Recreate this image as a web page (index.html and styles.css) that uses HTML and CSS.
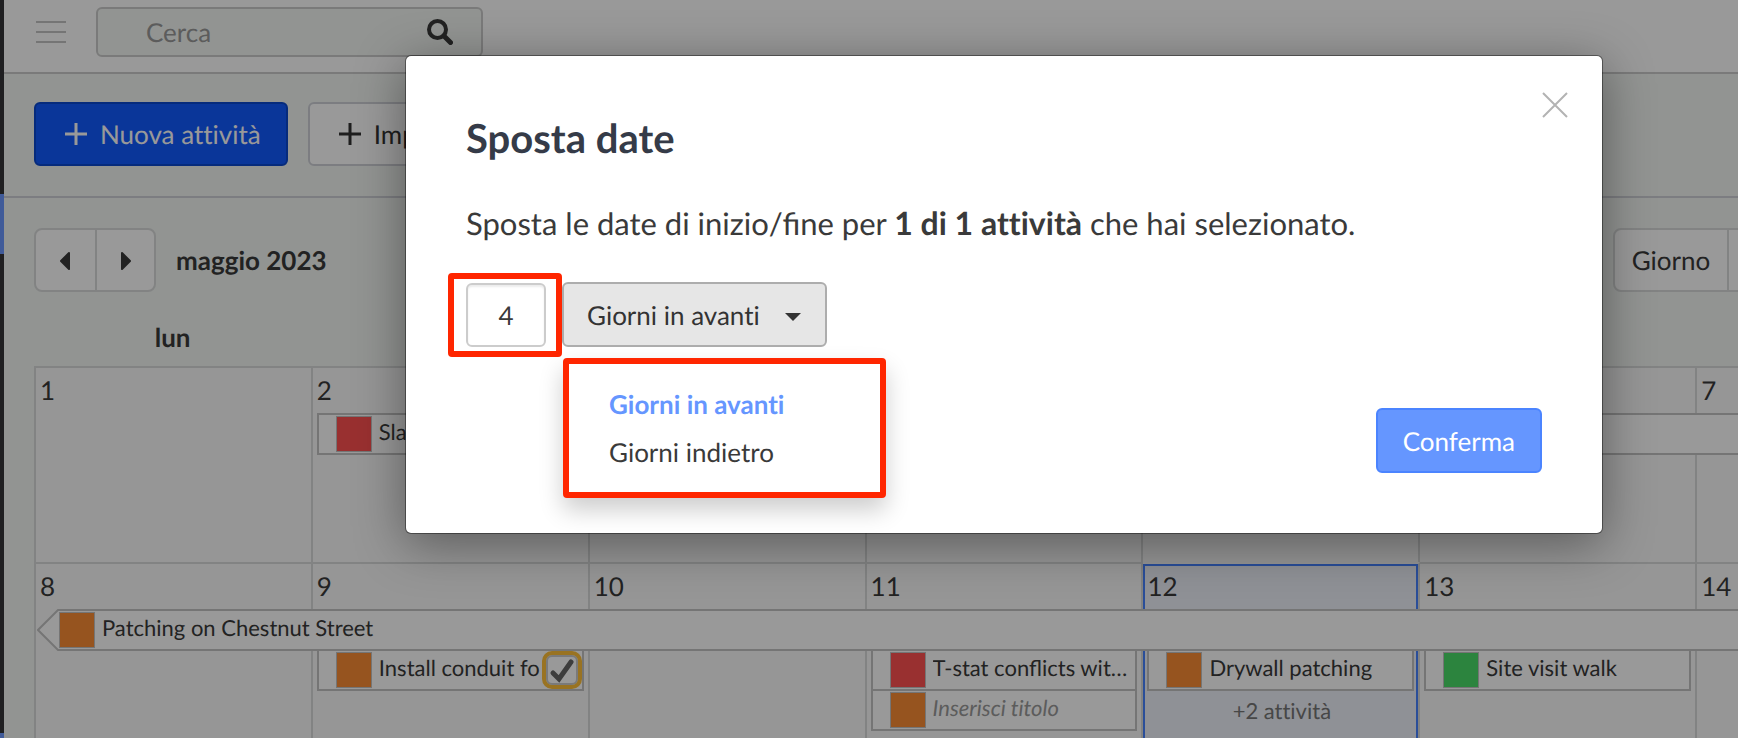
FILE: index.html
```
<!DOCTYPE html>
<html lang="it">

<head>
    <meta charset="utf-8">
    <title>Calendario</title>
    <link rel="stylesheet" href="styles.css">
</head>

<body>

    <div class="app">

        <nav class="sidebar">
            <span class="marker"></span>
            <span class="marker"></span>
        </nav>

        <main class="main">

            <header class="topbar">
                <button class="menu-toggle" aria-label="Menu">
                    <svg width="30" height="24" viewBox="0 0 30 24">
                        <path d="M0 2h30M0 12h30M0 22h30" stroke="#c4c4c4" stroke-width="2" />
                    </svg>
                </button>
                <div class="search">
                    <input type="search" placeholder="Cerca" aria-label="Cerca">
                    <svg width="26" height="26" viewBox="0 0 26 26" fill="none" stroke="#3a3a3a">
                        <circle cx="10.5" cy="10.5" r="8.5" stroke-width="4" />
                        <path d="M17 17l6.5 6.5" stroke-width="5" stroke-linecap="round" />
                    </svg>
                </div>
            </header>

            <div class="toolbar">
                <button class="btn btn-primary">
                    <svg class="plus" width="22" height="22" viewBox="0 0 22 22">
                        <path d="M11 0v22M0 11h22" stroke="currentColor" stroke-width="3" />
                    </svg>
                    Nuova attività
                </button>
                <button class="btn">
                    <svg class="plus" width="22" height="22" viewBox="0 0 22 22">
                        <path d="M11 0v22M0 11h22" stroke="currentColor" stroke-width="3" />
                    </svg>
                    Importa
                </button>
            </div>

            <section class="calendar">

                <div class="controls">
                    <div class="group">
                        <button class="arrow" aria-label="Mese precedente">
                            <svg width="11" height="18" viewBox="0 0 11 18">
                                <path d="M9 1L1 9l8 8z" fill="currentColor" stroke="currentColor" stroke-width="2" stroke-linejoin="round" />
                            </svg>
                        </button>
                        <button class="arrow" aria-label="Mese successivo">
                            <svg width="11" height="18" viewBox="0 0 11 18">
                                <path d="M2 1l8 8-8 8z" fill="currentColor" stroke="currentColor" stroke-width="2" stroke-linejoin="round" />
                            </svg>
                        </button>
                    </div>
                    <h2>maggio 2023</h2>
                    <div class="group views">
                        <button>Giorno</button>
                        <button>Settimana</button>
                        <button>Mese</button>
                    </div>
                </div>

                <div class="weekdays">
                    <span>lun</span>
                    <span>mar</span>
                    <span>mer</span>
                    <span>gio</span>
                    <span>ven</span>
                    <span>sab</span>
                    <span>dom</span>
                </div>

                <div class="week">
                    <div class="day col-1">1</div>
                    <div class="day col-2">2</div>
                    <div class="day col-3">3</div>
                    <div class="day col-4">4</div>
                    <div class="day col-5">5</div>
                    <div class="day col-6">6</div>
                    <div class="day col-7">7</div>
                    <div class="event from-2 to-end row-1"><i class="swatch red"></i><span>Slab</span></div>
                </div>

                <div class="week">
                    <div class="day col-1">8</div>
                    <div class="day col-2">9</div>
                    <div class="day col-3">10</div>
                    <div class="day col-4">11</div>
                    <div class="day col-5 today">12</div>
                    <div class="day col-6">13</div>
                    <div class="day col-7">14</div>

                    <div class="event from-1 to-end row-1 continued">
                        <svg width="22" height="42" viewBox="0 0 22 42">
                            <path d="M22 1h-1L1 21l20 20h1" fill="#fff" stroke="#c3c3c3" stroke-width="2" />
                        </svg>
                        <div class="event-body"><i class="swatch orange"></i><span>Patching on Chestnut Street</span></div>
                    </div>

                    <div class="event from-2 row-2">
                        <i class="swatch orange"></i><span class="cut">Install conduit fo</span>
                        <label class="tick">
                            <input type="checkbox" checked aria-label="Seleziona attività">
                            <svg width="26" height="26" viewBox="0 0 26 26">
                                <path d="M4 16l6 6L22 5" fill="none" stroke="#666" stroke-width="5" stroke-linecap="round" />
                            </svg>
                        </label>
                    </div>
                    <div class="event from-4 row-2"><i class="swatch red"></i><span>T-stat conflicts with ceiling</span></div>
                    <div class="event from-4 row-3"><i class="swatch orange"></i><span class="untitled">Inserisci titolo</span></div>
                    <div class="event from-5 row-2"><i class="swatch orange"></i><span>Drywall patching</span></div>
                    <a href="#" class="more from-5 row-3">+2 attività</a>
                    <div class="event from-6 row-2"><i class="swatch green"></i><span>Site visit walk</span></div>
                </div>

            </section>
        </main>

        <div class="overlay">
            <div class="modal" role="dialog" aria-labelledby="modal-title">
                <button class="close" aria-label="Chiudi">
                    <svg width="26" height="26" viewBox="0 0 26 26">
                        <path d="M1 1l24 24M25 1L1 25" stroke="#b3b3b3" stroke-width="2" />
                    </svg>
                </button>

                <h1 id="modal-title">Sposta date</h1>
                <p>Sposta le date di inizio/fine per <b>1 di 1 attività</b> che hai selezionato.</p>

                <div class="fields">
                    <div class="amount">
                        <input type="text" value="4" aria-label="Numero di giorni">
                    </div>
                    <div class="direction">
                        <select aria-label="Direzione">
                            <option>Giorni in avanti</option>
                            <option>Giorni indietro</option>
                        </select>
                        <svg class="caret" width="16" height="8" viewBox="0 0 16 8">
                            <path d="M0 0h16L8 8z" fill="#333" />
                        </svg>
                        <div class="dropdown">
                            <button class="active">Giorni in avanti</button>
                            <button>Giorni indietro</button>
                        </div>
                    </div>
                </div>

                <div class="actions">
                    <button class="confirm">Conferma</button>
                </div>
            </div>
        </div>
    </div>

</body>

</html>
```
FILE: styles.css
```
* {
    box-sizing: border-box;
}

body {
    margin: 0;
    height: 100vh;
    overflow: hidden;
    font-family: Lato, sans-serif;
    font-size: 26px;
    line-height: 32px;
    font-variant-ligatures: none;
    text-rendering: geometricPrecision;
    color: #3a3a3a;
    background-color: #f3f7f4;
}

button,
input,
select {
    font: inherit;
    font-variant-ligatures: none;
    text-rendering: inherit;
    color: inherit;
}

button {
    cursor: pointer;
}

/* the board is wider than the window and runs off its right side */
.app {
    position: relative;
    display: flex;
    width: calc(100% + 270px);
    height: 100vh;
    overflow: hidden;
}

.sidebar {
    display: flex;
    flex-direction: column;
    gap: 479px;
    flex: 0 0 4px;
    padding-top: 194px;
    background-color: #353537;
}

.marker {
    flex: 0 0 60px;
    background-color: #6b98ff;
}

.main {
    flex: 1;
    min-width: 0;
}

.topbar {
    display: flex;
    align-items: flex-start;
    gap: 30px;
    height: 74px;
    padding: 7px 32px;
    background-color: #fff;
    border-bottom: 2px solid #cbcccb;
}

.menu-toggle {
    display: flex;
    padding: 13px 0;
    border: none;
    background: none;
}

.search {
    display: flex;
    align-items: center;
    width: 387px;
    height: 50px;
    padding: 0 28px 0 48px;
    background-color: #f3f7f4;
    border: 2px solid #cbcccb;
    border-radius: 6px;
}

.search input {
    flex: 1;
    min-width: 0;
    padding: 0;
    border: none;
    outline: none;
    background: none;
}

.search input::placeholder {
    color: #999;
}

.toolbar {
    display: flex;
    gap: 20px;
    padding: 28px 30px 30px;
    border-bottom: 2px solid #cfd1d8;
}

.btn {
    display: flex;
    align-items: center;
    gap: 13px;
    height: 64px;
    padding: 0 25px 0 29px;
    color: #333;
    background-color: #fff;
    border: 2px solid #cfd1d8;
    border-radius: 6px;
}

.btn-primary {
    color: #fff;
    background-color: #125aff;
    border-color: #0a48cf;
}

.calendar {
    padding: 30px 34px 0 30px;
}

.controls {
    display: flex;
    align-items: center;
    gap: 20px;
}

.controls h2 {
    margin: 0;
    font-size: 26px;
}

.group {
    display: flex;
    height: 64px;
    background-color: #fff;
    border: 2px solid #d9dbda;
    border-radius: 8px;
    overflow: hidden;
}

.group button {
    padding: 0 17px;
    border: none;
    background: none;
}

.group button + button {
    padding: 0 16px;
    border-left: 2px solid #d9dbda;
}

.group .arrow,
.group .arrow + .arrow {
    width: 59px;
    padding: 0;
}

.views {
    margin-left: auto;
}

.weekdays {
    display: grid;
    grid-template-columns: repeat(7, 1fr);
    padding: 29px 0 13px;
    font-weight: bold;
    text-align: center;
}

.week {
    display: grid;
    grid-template-columns: repeat(7, 1fr);
    grid-template-rows: 47px 40px 40px 40px 29px;
    border-left: 2px solid #d9dbda;
}

.day {
    grid-row: 1 / -1;
    padding: 6px 4px;
    background-color: #fafafa;
    border-top: 2px solid #d9dbda;
    border-right: 2px solid #d9dbda;
}

.today {
    background-color: #eff2fa;
    border-top-color: #fafafa;
    box-shadow: inset 0 0 0 2px #4683ff;
}

.col-1 { grid-column: 1; }
.col-2 { grid-column: 2; }
.col-3 { grid-column: 3; }
.col-4 { grid-column: 4; }
.col-5 { grid-column: 5; }
.col-6 { grid-column: 6; }
.col-7 { grid-column: 7; }

.from-1 { grid-column-start: 1; }
.from-2 { grid-column-start: 2; }
.from-4 { grid-column-start: 4; }
.from-5 { grid-column-start: 5; }
.from-6 { grid-column-start: 6; }
.to-end { grid-column-end: -1; }

.row-1 { grid-row: 2; z-index: 1; }
.row-2 { grid-row: 3; }
.row-3 { grid-row: 4; }

.event {
    display: flex;
    align-items: center;
    gap: 7px;
    min-width: 0;
    height: 42px;
    margin: 0 6px 0 4px;
    padding: 0 6px 0 17px;
    font-size: 22px;
    font-variant-ligatures: normal;
    background-color: #fff;
    border: 2px solid #c3c3c3;
}

.event span {
    flex: 1;
    padding-bottom: 4px;
    overflow: hidden;
    white-space: nowrap;
    text-overflow: ellipsis;
}

.event .cut {
    text-overflow: clip;
}

.event .untitled {
    font-style: italic;
    font-variant-ligatures: none;
    color: #999;
}

.continued {
    gap: 0;
    margin-left: 1px;
    padding: 0;
    border: none;
    background: none;
}

.event-body {
    display: flex;
    align-items: center;
    gap: 7px;
    flex: 1;
    height: 42px;
    background-color: #fff;
    border: 2px solid #c3c3c3;
    border-left: none;
}

.swatch {
    flex: 0 0 36px;
    height: 36px;
    border: 1px solid #c3c3c3;
}

.red { background-color: #ff5050; }
.orange { background-color: #fa8c35; }
.green { background-color: #4adc68; }

.tick {
    display: grid;
    place-items: center;
    flex: 0 0 40px;
    height: 38px;
    margin: 0 -6px 0 -7px;
}

.tick input,
.tick svg {
    grid-area: 1 / 1;
}

.tick input {
    appearance: none;
    width: 40px;
    height: 38px;
    margin: 0;
    background-color: #fff;
    border: 4px solid #ffc03a;
    border-radius: 10px;
    box-shadow: inset 0 0 0 2px #ccc;
}

.more {
    padding-top: 6px;
    font-size: 22px;
    text-align: center;
    text-decoration: none;
    color: #777;
}

.overlay {
    position: absolute;
    inset: 0;
    z-index: 2;
    padding-top: 55px;
    background-color: rgba(0, 0, 0, 0.4);
}

.modal {
    position: relative;
    width: 1198px;
    max-width: 90%;
    margin: 0 auto;
    padding: 58px 60px 60px;
    background-color: #fff;
    background-clip: padding-box;
    border: 1px solid rgba(0, 0, 0, 0.4);
    border-radius: 6px;
    box-shadow: 0 10px 50px rgba(0, 0, 0, 0.4);
}

.modal h1 {
    margin: 0 0 41px;
    font-size: 40px;
    line-height: 48px;
    color: #353b48;
}

.modal p {
    margin: 0 0 39px;
    font-size: 31px;
    line-height: 40px;
    font-variant-ligatures: normal;
}

.modal b {
    font-size: 32px;
    font-variant-ligatures: none;
}

.close {
    position: absolute;
    top: 36px;
    right: 34px;
    display: flex;
    padding: 0;
    border: none;
    background: none;
}

.fields {
    display: flex;
    align-items: flex-end;
}

.amount {
    position: relative;
    padding-right: 16px;
}

/* red frame round the number box */
.amount::after {
    content: "";
    position: absolute;
    top: -10px;
    right: 0;
    bottom: -10px;
    left: -18px;
    border: 6px solid #ff2600;
    border-radius: 4px;
    pointer-events: none;
}

.amount input {
    display: block;
    width: 80px;
    height: 64px;
    padding: 0;
    text-align: center;
    border: 2px solid #ccc;
    border-radius: 6px;
    box-shadow: inset 0 2px 2px rgba(0, 0, 0, 0.08);
}

.direction {
    position: relative;
}

.direction select {
    appearance: none;
    display: block;
    width: 265px;
    height: 65px;
    padding: 0 23px;
    color: #333;
    background-color: #e6e6e6;
    border: 2px solid #adadad;
    border-radius: 6px;
}

.caret {
    position: absolute;
    top: 31px;
    right: 26px;
    pointer-events: none;
}

.dropdown {
    position: absolute;
    top: 76px;
    left: 1px;
    display: flex;
    flex-direction: column;
    width: 323px;
    padding: 16px 0;
    background-color: #fff;
    border: 6px solid #ff2600;
    border-radius: 4px;
    box-shadow: 0 12px 24px rgba(0, 0, 0, 0.2);
}

.dropdown button {
    height: 48px;
    padding: 0 40px;
    text-align: left;
    border: none;
    background: none;
}

.dropdown .active {
    font-weight: bold;
    color: #6596ff;
}

.actions {
    display: flex;
    justify-content: flex-end;
    margin-top: 61px;
}

.confirm {
    height: 65px;
    padding: 0 25px;
    color: #fff;
    background-color: #6596ff;
    border: 2px solid #4b84ff;
    border-radius: 6px;
}
```
